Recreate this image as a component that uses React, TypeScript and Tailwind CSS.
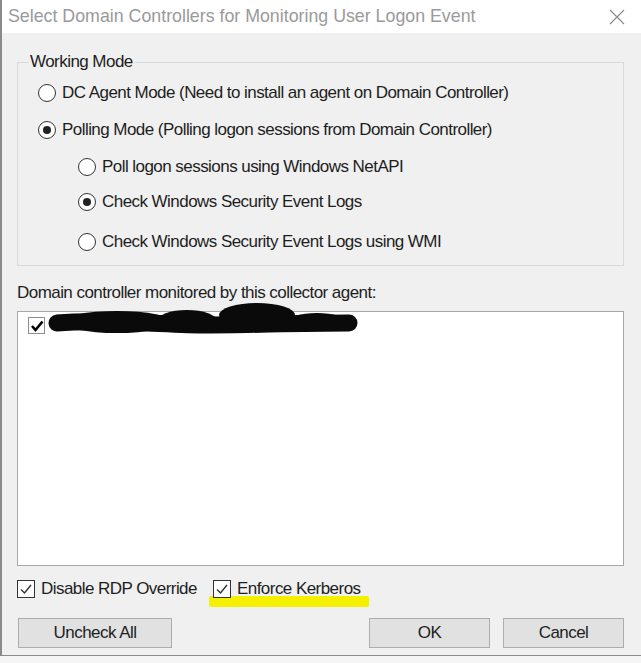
import React from "react";

const font = { fontFamily: '"Liberation Sans", Arial, sans-serif' };

const txt = "text-[17px] tracking-[-0.55px] leading-[20px] text-[#1e1e1e] whitespace-nowrap";

function Radio({ checked, label }: { checked?: boolean; label: string }) {
  return (
    <div className="flex items-center h-[24px] gap-[6px]">
      <span className="w-[18px] h-[18px] rounded-full border border-[#333] bg-white flex items-center justify-center shrink-0">
        {checked && <span className="w-[8px] h-[8px] rounded-full bg-[#222]" />}
      </span>
      <span className={txt}>{label}</span>
    </div>
  );
}

function Tick() {
  return (
    <span className="w-[18px] h-[18px] border border-[#333] bg-white flex items-center justify-center shrink-0">
      <svg width="14" height="14" viewBox="0 0 14 14">
        <path d="M2 7.5 L5.5 11 L12 3" fill="none" stroke="#333" strokeWidth="1.4" />
      </svg>
    </span>
  );
}

function Btn({ label, w }: { label: string; w: string }) {
  return (
    <button className={`${w} h-[30px] bg-[#e1e1e1] border border-[#adadad] text-[17px] tracking-[-0.55px] text-[#1e1e1e]`}>
      {label}
    </button>
  );
}

export default function App() {
  return (
    <div style={font} className="w-[641px] h-[663px] bg-[#f5f5f5] overflow-hidden">
      <div className="h-[656px] bg-[#f0f0f0] border-l-[2px] border-b border-[#8a8a8a] flex flex-col">
        {/* title bar */}
        <div className="h-[33px] bg-white flex items-center justify-between pl-[6px] pr-[14px] shrink-0">
          <span className="text-[17.8px] text-[#9a9a9a] whitespace-nowrap">
            Select Domain Controllers for Monitoring User Logon Event
          </span>
          <svg width="20" height="16" viewBox="0 0 20 16">
            <path d="M3 1 L17 15 M17 1 L3 15" stroke="#8c8c8c" strokeWidth="1.2" />
          </svg>
        </div>

        <div className="pl-[15px] pr-[17px] flex flex-col">
          <fieldset className="mt-[19px] w-[607px] border border-[#d9d9d9] p-0 pb-[11px] pl-[20px]">
            <legend className={`ml-[-9px] px-[1px] ${txt}`}>Working Mode</legend>
            <div className="mt-[9px]">
              <Radio label="DC Agent Mode (Need to install an agent on Domain Controller)" />
            </div>
            <div className="mt-[13px]">
              <Radio checked label="Polling Mode (Polling logon sessions from Domain Controller)" />
            </div>
            <div className="pl-[40px]">
              <div className="mt-[13px]">
                <Radio label="Poll logon sessions using Windows NetAPI" />
              </div>
              <div className="mt-[11px]">
                <Radio checked label="Check Windows Security Event Logs" />
              </div>
              <div className="mt-[16px]">
                <Radio label="Check Windows Security Event Logs using WMI" />
              </div>
            </div>
          </fieldset>

          <div className={`mt-[17px] ${txt}`}>Domain controller monitored by this collector agent:</div>

          <div className="mt-[8px] w-[607px] h-[255px] bg-white border border-[#a8a8a8] pl-[10px] pt-[4px]">
            <div className="flex items-start">
              <span className="mt-[1px] w-[17px] h-[17px] border border-[#8f8f8f] bg-white flex items-center justify-center shrink-0">
                <svg width="14" height="14" viewBox="0 0 14 14">
                  <path d="M2 7 L5.5 11 L12.5 2.5" fill="none" stroke="#000" strokeWidth="2.6" />
                </svg>
              </span>
              <svg width="316" height="34" viewBox="0 0 316 34" className="mt-[-14px] ml-[2px]">
                <path d="M10 21 C 60 17, 120 23, 160 23 C 200 23, 250 21, 302 21" stroke="#0a0a0a" strokeWidth="17" strokeLinecap="round" fill="none" />
                <ellipse cx="140" cy="19" rx="30" ry="11" fill="#0a0a0a" />
                <ellipse cx="210" cy="13" rx="38" ry="12" fill="#0a0a0a" />
                <ellipse cx="70" cy="20" rx="55" ry="11" fill="#0a0a0a" />
                <ellipse cx="270" cy="20" rx="30" ry="9" fill="#0a0a0a" />
              </svg>
            </div>
          </div>

          <div className="mt-[13px] flex items-center">
            <div className="w-[196px] flex items-center h-[20px] gap-[6px]">
              <Tick />
              <span className={txt}>Disable RDP Override</span>
            </div>
            <div className="relative flex items-center h-[20px] gap-[6px]">
              <span className="absolute left-[-4px] top-[17px] w-[160px] h-[11px] bg-[#f4f000] rounded-[2px]" />
              <span className="relative">
                <Tick />
              </span>
              <span className={txt}>Enforce Kerberos</span>
            </div>
          </div>

          <div className="mt-[19px] flex items-center">
            <Btn label="Uncheck All" w="w-[154px] ml-[1px]" />
            <div className="flex-1" />
            <Btn label="OK" w="w-[121px]" />
            <div className="w-[13px]" />
            <Btn label="Cancel" w="w-[121px]" />
          </div>
        </div>
      </div>
    </div>
  );
}
